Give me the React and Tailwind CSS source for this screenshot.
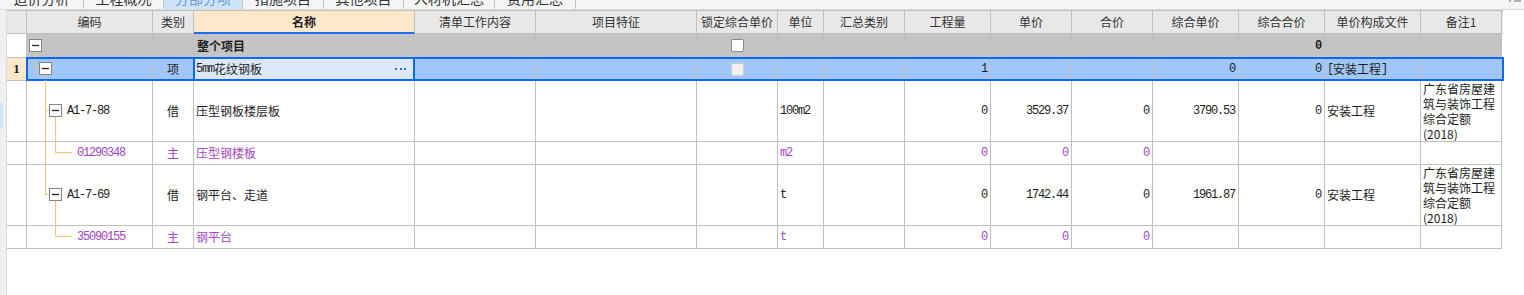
import React from "react";

const GRID =
  "grid grid-cols-[20px_126px_41px_221px_121px_161px_81px_46px_81px_86px_81px_81px_86px_86px_96px_81px]";
const B = "border-r border-b border-[#c0c0c0]";
const MONO =
  "font-['Liberation_Mono','DejaVu_Sans_Mono',monospace] text-[12px] tracking-[-1.2px]";
const P = "text-[#a346c4]";
const OR = "#ffc56b";

function C({ className = "", children }) {
  return (
    <div className={`${B} flex items-center overflow-hidden whitespace-nowrap ${className}`}>
      {children}
    </div>
  );
}
const R = ({ className = "", children }) => (
  <C className={`justify-end pr-[3px] ${MONO} ${className}`}>{children}</C>
);
const L = ({ className = "", children }) => (
  <C className={`pl-[2px] ${className}`}>{children}</C>
);
const M = ({ className = "", children }) => (
  <C className={`justify-center ${className}`}>{children}</C>
);

function Box({ x, y }) {
  return (
    <g>
      <rect x={x + 0.5} y={y + 0.5} width="12" height="12" fill="#fff" stroke="#858585" />
      <line x1={x + 3} y1={y + 6.5} x2={x + 10} y2={y + 6.5} stroke="#222" strokeWidth="1.3" />
    </g>
  );
}

function TreeCell({ h, className = "", children, svg, textLeft }) {
  return (
    <div className={`${B} relative flex items-center ${className}`}>
      <svg
        className="absolute left-0 top-0 overflow-visible pointer-events-none"
        width="125"
        height={h}
      >
        {svg}
      </svg>
      {children ? (
        <span className={`relative ${MONO}`} style={{ marginLeft: textLeft }}>
          {children}
        </span>
      ) : null}
    </div>
  );
}

const REMARK = (
  <C className="items-start! pl-[2px] text-[12px] leading-[15px] whitespace-normal">
    <div>
      广东省房屋建
      <br />
      筑与装饰工程
      <br />
      综合定额
      <br />
      (2018)
    </div>
  </C>
);

function Check({ disabled }) {
  return (
    <div
      className={
        disabled
          ? "w-[13px] h-[13px] bg-[#f0f0f0] border border-[#cfcfcf] rounded-[2px]"
          : "w-[13px] h-[13px] bg-white border border-[#8a8a8a] rounded-[2px]"
      }
    />
  );
}

const TABS = [
  ["造价分析", "w-[84px]"],
  ["工程概况", "w-[80px]"],
  ["分部分项", "w-[79px]"],
  ["措施项目", "w-[81px]"],
  ["其他项目", "w-[80px]"],
  ["人材机汇总", "w-[91px]"],
  ["费用汇总", "w-[81px]"],
];

export default function App() {
  return (
    <div className="w-[1524px] h-[295px] bg-white overflow-hidden flex flex-col font-['Noto_Sans_CJK_SC',sans-serif] text-[#1e1e1e]">
      {/* tab strip */}
      <div className="h-[10px] shrink-0 bg-[#f5f5f5] border-b border-[#dcdcdc] flex overflow-hidden">
        {TABS.map(([t, w], i) => (
          <div
            key={t}
            className={`${w} h-[9px] overflow-hidden border-r border-[#c8c8c8] ${
              i === 2 ? "bg-[#cde4f9] text-[#6b9ad0]" : "text-[#333]"
            }`}
          >
            <div className="-mt-[11px] h-[18px] leading-[18px] text-[14px] text-center">{t}</div>
          </div>
        ))}
        <div className="ml-auto flex gap-[3px] pr-[3px]">
          <div className="w-[2px] h-[2px] bg-[#b0b0b0]" />
          <div className="w-[7px] h-[2px] bg-[#b0b0b0]" />
        </div>
      </div>

      <div className="flex flex-1">
        {/* left strip */}
        <div className="w-[7px] shrink-0 bg-[#f0f0f0] border-r border-[#d9d9d9] flex flex-col">
          <div className="h-[93px]" />
          <div className="w-[3px] h-[25px] bg-[#cfe3f7]" />
        </div>

        {/* table */}
        <div className="w-[1496px] self-start border-t border-[#c0c0c0] text-[12px]">
          {/* header */}
          <div className={`${GRID} h-[23px] bg-[#e8e8e8] text-[#333]`}>
            <M />
            <M>编码</M>
            <M>类别</M>
            <div className="border-r border-r-[#c0c0c0] border-b-2 border-b-[#1a6ff0] bg-[#fde8c9] flex items-center justify-center font-bold text-[#222]">
              名称
            </div>
            <M>清单工作内容</M>
            <M>项目特征</M>
            <M>锁定综合单价</M>
            <M>单位</M>
            <M>汇总类别</M>
            <M>工程量</M>
            <M>单价</M>
            <M>合价</M>
            <M>综合单价</M>
            <M>综合合价</M>
            <M>单价构成文件</M>
            <M>备注1</M>
          </div>

          {/* row 1: 整个项目 */}
          <div className={`${GRID} h-[24px]`}>
            <C className="bg-white" />
            <TreeCell
              h={24}
              className="bg-[#c4c4c4]"
              svg={
                <>
                  <line x1="8.5" y1="18" x2="8.5" y2="25" stroke={OR} />
                  <Box x={2} y={5} />
                </>
              }
            />
            <C className="bg-[#c4c4c4]" />
            <L className="bg-[#c4c4c4] font-bold pl-[3px]">整个项目</L>
            <C className="bg-[#c4c4c4]" />
            <C className="bg-[#c4c4c4]" />
            <M className="bg-[#c4c4c4]">
              <Check />
            </M>
            <C className="bg-[#c4c4c4]" />
            <C className="bg-[#c4c4c4]" />
            <C className="bg-[#c4c4c4]" />
            <C className="bg-[#c4c4c4]" />
            <C className="bg-[#c4c4c4]" />
            <C className="bg-[#c4c4c4]" />
            <R className="bg-[#c4c4c4] font-bold">0</R>
            <C className="bg-[#c4c4c4]" />
            <C className="bg-[#c4c4c4]" />
          </div>

          {/* row 2: selected */}
          <div className={`${GRID} h-[23px] relative`}>
            <M className="bg-[#fde8c9] font-['Liberation_Serif',serif] font-bold text-[13px]">1</M>
            <TreeCell
              h={23}
              className="bg-[#a0c6fa]"
              svg={
                <>
                  <line x1="8.5" y1="-1" x2="8.5" y2="10.5" stroke={OR} />
                  <line x1="8" y1="10.5" x2="12" y2="10.5" stroke={OR} />
                  <line x1="18.5" y1="17" x2="18.5" y2="24" stroke={OR} />
                  <Box x={12} y={4} />
                </>
              }
            />
            <M className="bg-[#a0c6fa]">项</M>
            <div className={`${B} relative bg-[#dde9fb] flex items-center pl-[2px] pr-[8px]`}>
              <span className={MONO}>5mm</span>
              <span>花纹钢板</span>
              <span className="ml-auto flex gap-[2.5px]">
                <span className="w-[2px] h-[2px] bg-[#2d6fd6]" />
                <span className="w-[2px] h-[2px] bg-[#2d6fd6]" />
                <span className="w-[2px] h-[2px] bg-[#2d6fd6]" />
              </span>
              <div className="absolute left-[-1px] right-[-1px] top-[-1px] bottom-[-1px] border-2 border-[#0b6af5] pointer-events-none" />
            </div>
            <C className="bg-[#a0c6fa]" />
            <C className="bg-[#a0c6fa]" />
            <M className="bg-[#a0c6fa]">
              <Check disabled />
            </M>
            <C className="bg-[#a0c6fa]" />
            <C className="bg-[#a0c6fa]" />
            <R className="bg-[#a0c6fa]">1</R>
            <C className="bg-[#a0c6fa]" />
            <C className="bg-[#a0c6fa]" />
            <R className="bg-[#a0c6fa]">0</R>
            <R className="bg-[#a0c6fa]">0</R>
            <L className="bg-[#a0c6fa]">
              <span className={MONO}>[</span>安装工程<span className={MONO}>]</span>
            </L>
            <C className="bg-[#a0c6fa]" />
            <div className="absolute left-[19px] right-[-1px] top-[-1px] bottom-0 border-2 border-[#0b6af5] pointer-events-none" />
          </div>

          {/* row 3: A1-7-88 */}
          <div className={`${GRID} h-[61px]`}>
            <C />
            <TreeCell
              h={61}
              textLeft={40}
              svg={
                <>
                  <line x1="18.5" y1="-1" x2="18.5" y2="62" stroke={OR} />
                  <line x1="18" y1="29.5" x2="22" y2="29.5" stroke={OR} />
                  <line x1="28.5" y1="36" x2="28.5" y2="62" stroke={OR} />
                  <Box x={22} y={23} />
                </>
              }
            >
              A1-7-88
            </TreeCell>
            <M>借</M>
            <L>压型钢板楼层板</L>
            <C />
            <C />
            <C />
            <L className={MONO}>100m2</L>
            <C />
            <R>0</R>
            <R>3529.37</R>
            <R>0</R>
            <R>3790.53</R>
            <R>0</R>
            <L>安装工程</L>
            {REMARK}
          </div>

          {/* row 4: 01290348 */}
          <div className={`${GRID} h-[23px] ${P}`}>
            <C />
            <TreeCell
              h={23}
              textLeft={50}
              svg={
                <>
                  <line x1="18.5" y1="-1" x2="18.5" y2="24" stroke={OR} />
                  <line x1="28.5" y1="-1" x2="28.5" y2="10.5" stroke={OR} />
                  <line x1="28" y1="10.5" x2="45" y2="10.5" stroke={OR} />
                </>
              }
            >
              01290348
            </TreeCell>
            <M>主</M>
            <L>压型钢楼板</L>
            <C />
            <C />
            <C />
            <L className={MONO}>m2</L>
            <C />
            <R>0</R>
            <R>0</R>
            <R>0</R>
            <C />
            <C />
            <C />
            <C />
          </div>

          {/* row 5: A1-7-69 */}
          <div className={`${GRID} h-[61px]`}>
            <C />
            <TreeCell
              h={61}
              textLeft={40}
              svg={
                <>
                  <line x1="18.5" y1="-1" x2="18.5" y2="29.5" stroke={OR} />
                  <line x1="18" y1="29.5" x2="22" y2="29.5" stroke={OR} />
                  <line x1="28.5" y1="36" x2="28.5" y2="62" stroke={OR} />
                  <Box x={22} y={23} />
                </>
              }
            >
              A1-7-69
            </TreeCell>
            <M>借</M>
            <L>钢平台、走道</L>
            <C />
            <C />
            <C />
            <L className={MONO}>t</L>
            <C />
            <R>0</R>
            <R>1742.44</R>
            <R>0</R>
            <R>1961.87</R>
            <R>0</R>
            <L>安装工程</L>
            {REMARK}
          </div>

          {/* row 6: 35090155 */}
          <div className={`${GRID} h-[23px] ${P}`}>
            <C />
            <TreeCell
              h={23}
              textLeft={50}
              svg={
                <>
                  <line x1="28.5" y1="-1" x2="28.5" y2="10.5" stroke={OR} />
                  <line x1="28" y1="10.5" x2="45" y2="10.5" stroke={OR} />
                </>
              }
            >
              35090155
            </TreeCell>
            <M>主</M>
            <L>钢平台</L>
            <C />
            <C />
            <C />
            <L className={MONO}>t</L>
            <C />
            <R>0</R>
            <R>0</R>
            <R>0</R>
            <C />
            <C />
            <C />
            <C />
          </div>
        </div>
      </div>
    </div>
  );
}
